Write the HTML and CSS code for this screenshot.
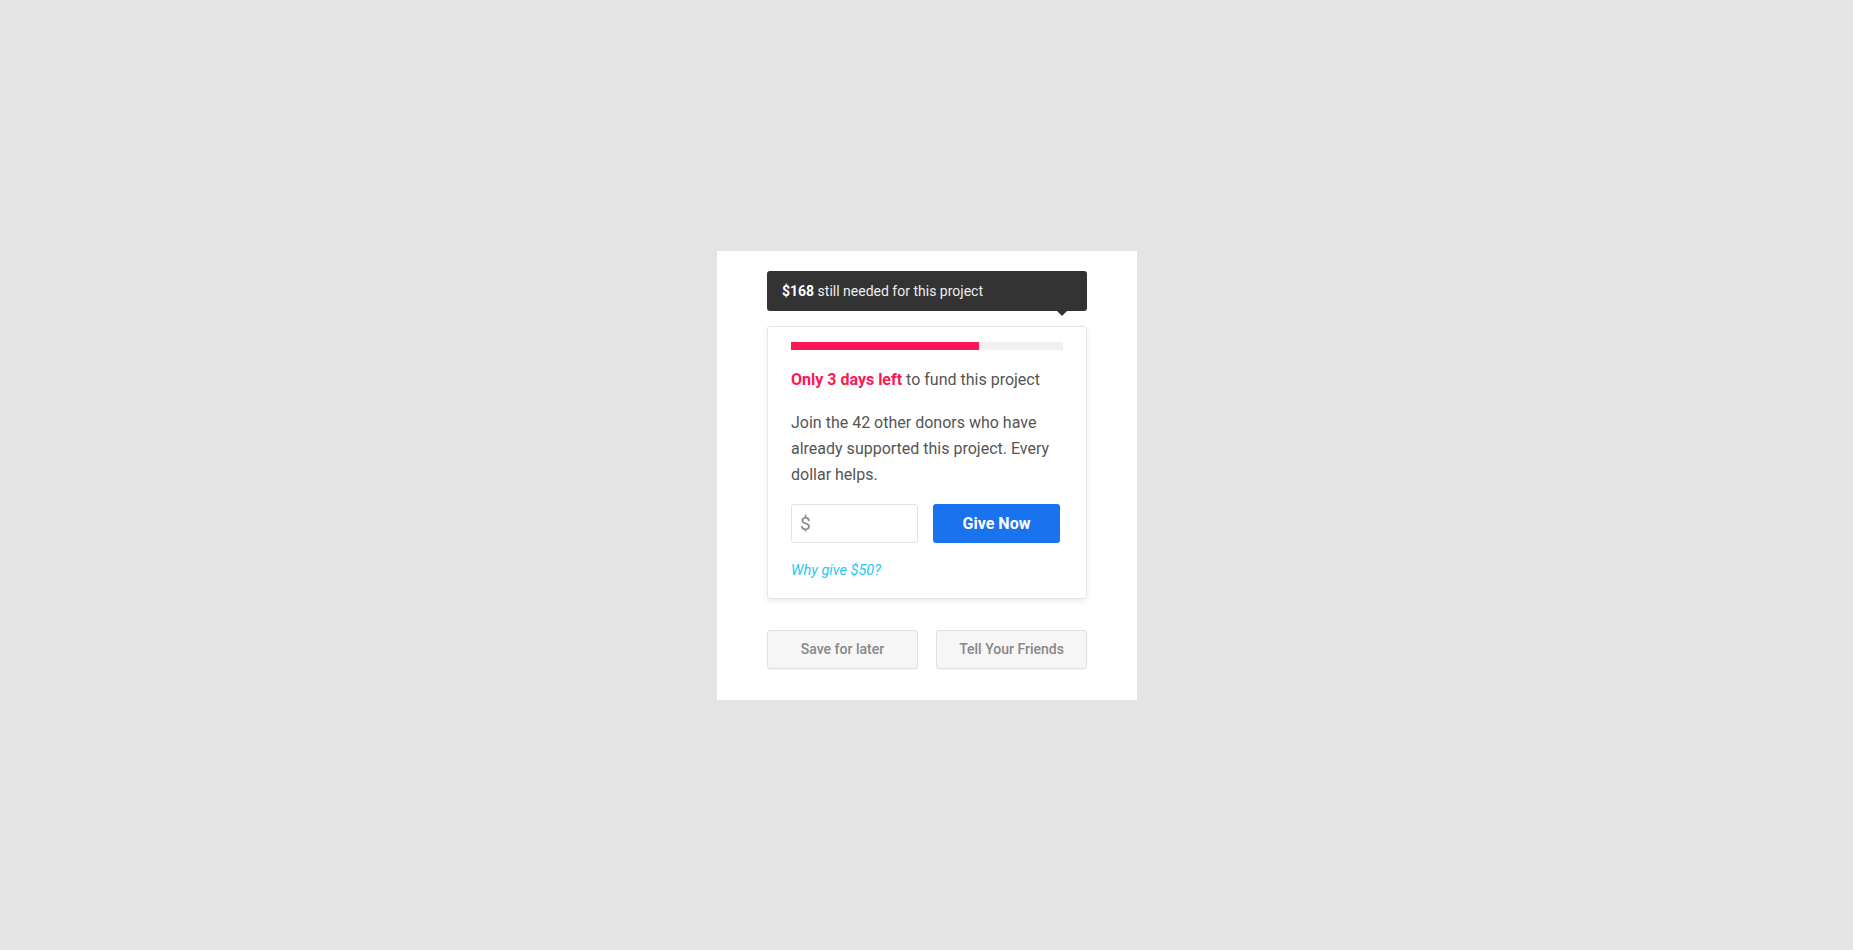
FILE: index.html
```html
<!DOCTYPE html>
<html>
<head>
<meta charset="utf-8">
<link rel="stylesheet" href="styles.css">
</head>
<body>
<div class="page">
  <div class="panel">
    <div class="tip"><b>$168</b> still needed for this project</div>
    <div class="card">
      <div class="bar"><div class="fill" style="width:69%"></div></div>
      <p class="urgent"><span class="red">Only 3 days left</span> to fund this project</p>
      <p class="desc">Join the 42 other donors who have already supported this project. Every dollar helps.</p>
      <div class="give">
        <div class="amount">$</div>
        <button class="btn-give">Give Now</button>
      </div>
      <a class="why">Why give $50?</a>
    </div>
    <div class="actions">
      <button class="btn-sec">Save for later</button>
      <button class="btn-sec">Tell Your Friends</button>
    </div>
  </div>
</div>
</body>
</html>
```
FILE: styles.css
```css
html, body { margin: 0; height: 100%; }
body {
  background: #e4e4e4;
  font-family: Roboto, "Liberation Sans", sans-serif;
}
.page {
  height: 100%;
  box-sizing: border-box;
  padding-left: 1px;
  display: flex;
  align-items: center;
  justify-content: center;
}
.panel {
  background: #fff;
  width: 320px;
  padding: 20px 50px 31px;
  display: flex;
  flex-direction: column;
}
.tip {
  position: relative;
  background: #333;
  color: #eee;
  font-size: 14px;
  height: 40px;
  line-height: 40px;
  padding: 0 15px;
  border-radius: 3px;
  box-sizing: border-box;
}
.tip b { color: #fff; font-weight: 700; }
.tip::after {
  content: "";
  position: absolute;
  right: 20px;
  bottom: -5px;
  border-left: 5px solid transparent;
  border-right: 5px solid transparent;
  border-top: 5px solid #333;
}
.card {
  margin-top: 15px;
  border: 1px solid #e6e6e6;
  border-radius: 3px;
  box-shadow: 0 2px 6px rgba(0,0,0,0.08);
  padding: 15px 23px 17px;
  box-sizing: border-box;
}
.bar {
  height: 8px;
  background: #f1f1f1;
}
.fill { height: 100%; background: #ff1654; }
.urgent {
  margin: 18px 0 0;
  font-size: 16px;
  line-height: 24px;
  color: #555;
}
.red { color: #ff1654; font-weight: 700; }
.desc {
  margin: 18px 0 0;
  font-size: 16px;
  line-height: 26px;
  color: #555;
}
.give {
  display: flex;
  gap: 15px;
  margin-top: 16px;
}
.amount {
  width: 127px;
  height: 39px;
  box-sizing: border-box;
  border: 1px solid #e3e3e3;
  border-radius: 3px;
  font-size: 19px;
  color: #888;
  line-height: 37px;
  padding-left: 8px;
}
.btn-give {
  width: 127px;
  height: 39px;
  border: none;
  border-radius: 3px;
  background: #1a73ee;
  color: #fff;
  font-family: Roboto, "Liberation Sans", sans-serif;
  font-size: 16px;
  font-weight: 700;
  padding: 0;
}
.why {
  display: block;
  margin-top: 18px;
  font-size: 14.5px;
  line-height: 20px;
  font-style: italic;
  color: #1ec8f0;
}
.actions {
  display: flex;
  justify-content: space-between;
  margin-top: 31px;
}
.btn-sec {
  width: 151px;
  height: 39px;
  border: 1px solid #e0e0e0;
  border-radius: 3px;
  background: #f6f6f6;
  box-shadow: 0 1px 2px rgba(0,0,0,0.04);
  color: #888;
  font-family: Roboto, "Liberation Sans", sans-serif;
  font-size: 14px;
  font-weight: 500;
  padding: 0;
}
```
